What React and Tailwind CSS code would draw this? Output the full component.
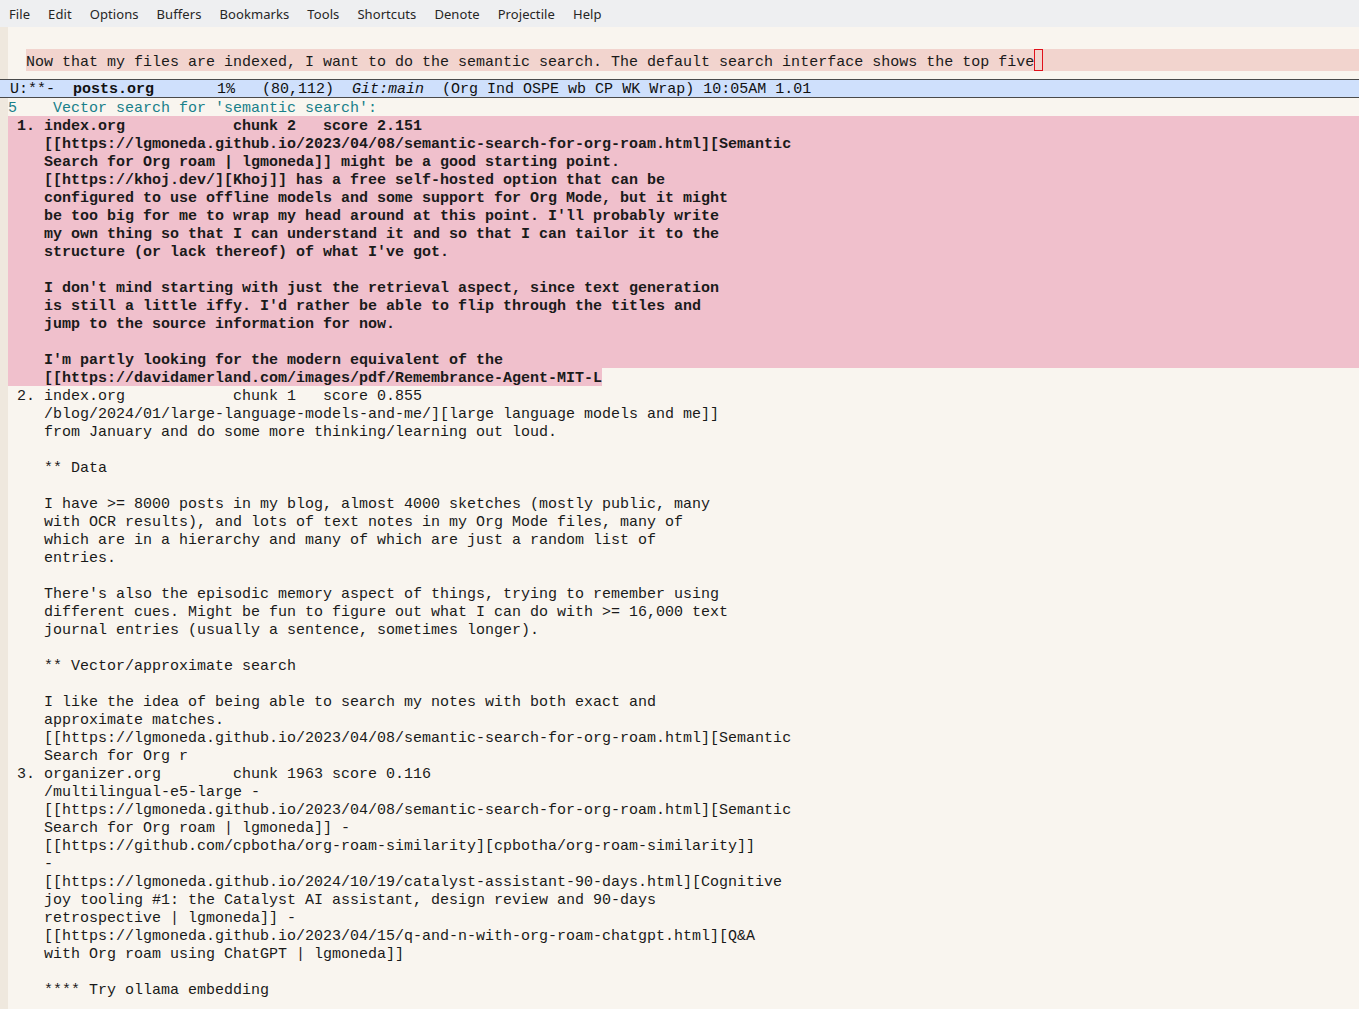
import React from 'react';

const MENU = ['File', 'Edit', 'Options', 'Buffers', 'Bookmarks', 'Tools', 'Shortcuts', 'Denote', 'Projectile', 'Help'];

const MODE_LINE = {
  state: 'U:**-  ',
  buffer: 'posts.org',
  middle: '       1%   (80,112)  ',
  vc: 'Git:main',
  rest: '  (Org Ind OSPE wb CP WK Wrap) 10:05AM 1.01',
};

// first result, highlighted and bold
const FIRST = [
  ' 1. index.org            chunk 2   score 2.151',
  '    [[https://lgmoneda.github.io/2023/04/08/semantic-search-for-org-roam.html][Semantic',
  '    Search for Org roam | lgmoneda]] might be a good starting point.',
  '    [[https://khoj.dev/][Khoj]] has a free self-hosted option that can be',
  '    configured to use offline models and some support for Org Mode, but it might',
  '    be too big for me to wrap my head around at this point. I\'ll probably write',
  '    my own thing so that I can understand it and so that I can tailor it to the',
  '    structure (or lack thereof) of what I\'ve got.',
  '',
  '    I don\'t mind starting with just the retrieval aspect, since text generation',
  '    is still a little iffy. I\'d rather be able to flip through the titles and',
  '    jump to the source information for now.',
  '',
  '    I\'m partly looking for the modern equivalent of the',
];
const FIRST_TAIL = '    [[https://davidamerland.com/images/pdf/Remembrance-Agent-MIT-L';

const REST = [
  ' 2. index.org            chunk 1   score 0.855',
  '    /blog/2024/01/large-language-models-and-me/][large language models and me]]',
  '    from January and do some more thinking/learning out loud.',
  '',
  '    ** Data',
  '',
  '    I have >= 8000 posts in my blog, almost 4000 sketches (mostly public, many',
  '    with OCR results), and lots of text notes in my Org Mode files, many of',
  '    which are in a hierarchy and many of which are just a random list of',
  '    entries.',
  '',
  '    There\'s also the episodic memory aspect of things, trying to remember using',
  '    different cues. Might be fun to figure out what I can do with >= 16,000 text',
  '    journal entries (usually a sentence, sometimes longer).',
  '',
  '    ** Vector/approximate search',
  '',
  '    I like the idea of being able to search my notes with both exact and',
  '    approximate matches.',
  '    [[https://lgmoneda.github.io/2023/04/08/semantic-search-for-org-roam.html][Semantic',
  '    Search for Org r',
  ' 3. organizer.org        chunk 1963 score 0.116',
  '    /multilingual-e5-large -',
  '    [[https://lgmoneda.github.io/2023/04/08/semantic-search-for-org-roam.html][Semantic',
  '    Search for Org roam | lgmoneda]] -',
  '    [[https://github.com/cpbotha/org-roam-similarity][cpbotha/org-roam-similarity]]',
  '    -',
  '    [[https://lgmoneda.github.io/2024/10/19/catalyst-assistant-90-days.html][Cognitive',
  '    joy tooling #1: the Catalyst AI assistant, design review and 90-days',
  '    retrospective | lgmoneda]] -',
  '    [[https://lgmoneda.github.io/2023/04/15/q-and-n-with-org-roam-chatgpt.html][Q&A',
  '    with Org roam using ChatGPT | lgmoneda]]',
  '',
  '    **** Try ollama embedding',
];

function Line({ text }) {
  return <div className="h-[18px] leading-[22px] whitespace-pre">{text || ' '}</div>;
}

export default function App() {
  return (
    <div
      className="w-[1359px] h-[1009px] overflow-hidden bg-[#f9f5ef] text-[#1a1a1a] flex flex-col"
      style={{ fontFamily: '"Liberation Mono", monospace' }}
    >
      {/* menu bar */}
      <div
        className="h-[27px] shrink-0 bg-[#eeeff1] flex items-center gap-[18px] pl-[9px] pt-[2px] text-[13px] tracking-[0.08px] text-[#262626]"
        style={{ fontFamily: '"Noto Sans", sans-serif' }}
      >
        {MENU.map((m) => (
          <span key={m}>{m}</span>
        ))}
      </div>

      {/* top window */}
      <div className="h-[52px] shrink-0 flex">
        <div className="w-[8px] shrink-0 bg-[#efe8de]"></div>
        <div className="flex-1 pt-[22px] pl-[18px] text-[15px]">
          <div className="h-[22px] bg-[#f2d4ce] whitespace-pre flex">
            <span className="leading-[28px]">Now that my files are indexed, I want to do the semantic search. The default search interface shows the top five</span>
            <span className="w-[9px] h-[22px] border border-[#e0101a]"></span>
          </div>
        </div>
      </div>

      {/* mode line */}
      <div className="h-[19px] shrink-0 bg-[#cfe0fc] border-y border-[#4a4a4a] pl-[10px] text-[15px] leading-[19px] whitespace-pre text-[#111]">
        <span>{MODE_LINE.state}</span>
        <span className="font-bold">{MODE_LINE.buffer}</span>
        <span>{MODE_LINE.middle}</span>
        <span className="italic">{MODE_LINE.vc}</span>
        <span>{MODE_LINE.rest}</span>
      </div>

      {/* results window */}
      <div className="flex-1 flex min-h-0">
        <div className="w-[8px] shrink-0 bg-[#efe8de]"></div>
        <div className="flex-1 text-[15px]">
          <div className="h-[18px] leading-[22px] whitespace-pre text-[#19808a]">5    Vector search for 'semantic search':</div>
          <div className="bg-[#f0c0cc] font-bold">
            {FIRST.map((l, i) => (
              <Line key={i} text={l} />
            ))}
          </div>
          <div className="h-[18px] leading-[22px] whitespace-pre font-bold">
            <span className="bg-[#f0c0cc] inline-block h-[18px]">{FIRST_TAIL}</span>
          </div>
          {REST.map((l, i) => (
            <Line key={i} text={l} />
          ))}
        </div>
      </div>
    </div>
  );
}
